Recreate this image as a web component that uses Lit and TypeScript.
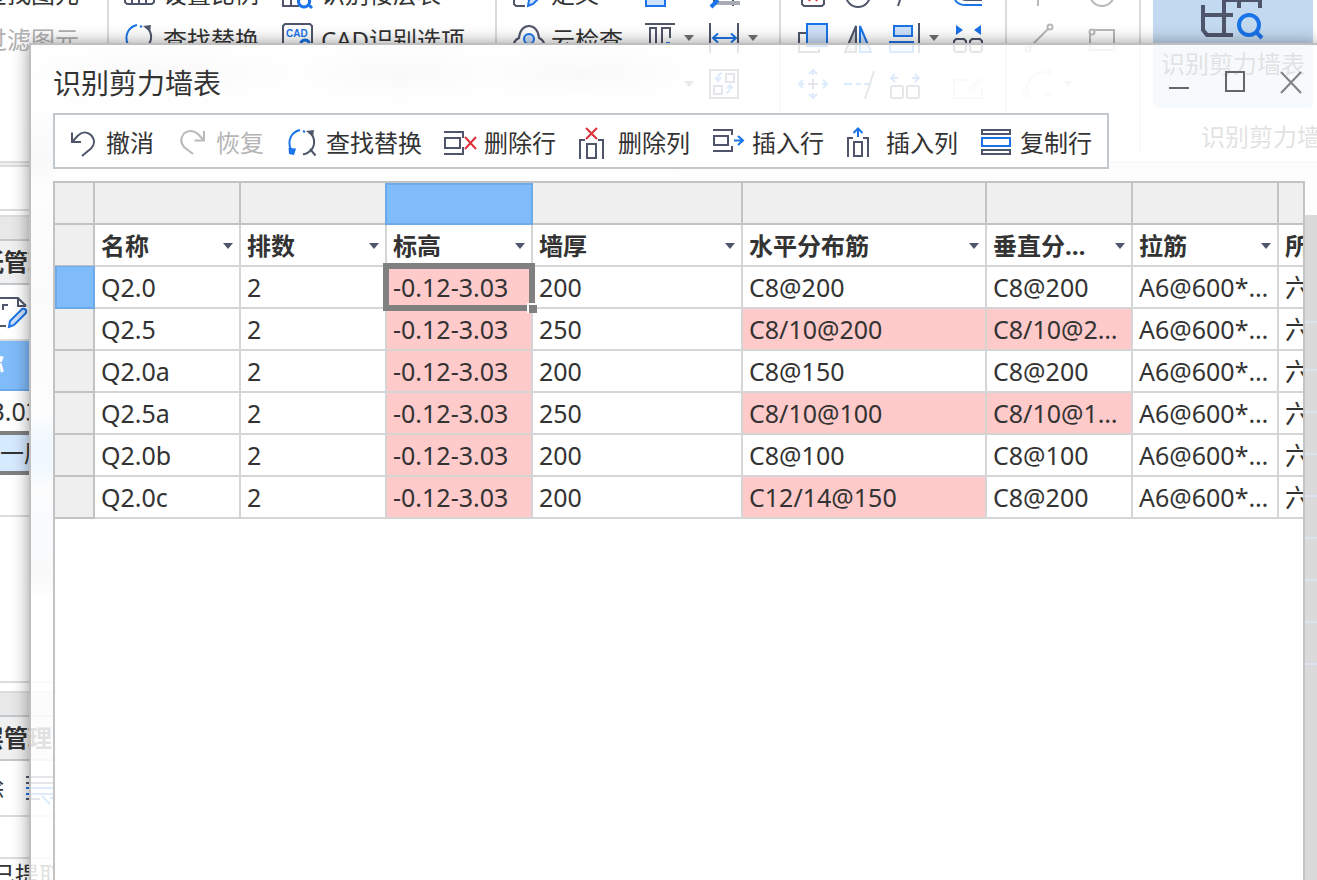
import { LitElement, html, svg, css, nothing, TemplateResult } from "lit";
import { customElement, property } from "lit/decorators.js";
import { classMap } from "lit/directives/class-map.js";

const D = "#4f566b";
const B = "#1a73e8";
const L = "#cfe2fa";
const R = "#dc2f38";
const G = "#b9b9b9";

const line = (d: string, c = D, w = 2, f = "none") =>
  svg`<path d=${d} stroke=${c} stroke-width=${w} fill=${f}></path>`;

const icons: Record<string, TemplateResult | TemplateResult[]> = {
  undo: [
    line("M6 5.500V15H15"),
    line("M7 14L12 8.500C16 4.500 21 4.500 25 8C29.500 13 28.500 18 25 21.500L16 29"),
  ],
  redo: [
    line("M28 4V13.500H18.500", G),
    line("M27 12.500L22 7C18 3 12 3 8 6.500C4 11.500 5 16.500 8 20L17 27", G),
  ],
  find: [
    line("M14 3C5 5 1 14 5 23L7 26", B, 2),
    svg`<path d="M2.500 21L10 21.500L8 28L3 27Z" fill=${B}></path>`,
    line("M17 4L19 5", B, 2),
    line("M24 5C30 12 29 20 24 24C21 27 19 27.500 17 27M24 22L29.500 28.500", D, 2),
    svg`<path d="M20 4L28 3L27 10Z" fill=${D}></path>`,
  ],
  delRow: [
    line("M0 5H19V11M0 27H19V20M1 11H16V21H1Z"),
    line("M21 10L32 22M32 10L21 22", R, 2),
  ],
  delCol: [
    line("M2 32V13H7M25 32V13H20M9 31V17H18V31Z"),
    line("M8 1L19 12M19 1L8 12", R, 2),
  ],
  insRow: [
    line("M1 3H20V8M1 24H20V19M2 9H16V18H2Z"),
    line("M22 13.500H31M26 9L31 13.500L26 18", B, 2),
  ],
  insCol: [
    line("M2 30V11H7M22 30V11H17M8 29V15H16V29Z"),
    line("M12 10V2M7.500 6L12 1.500L16.500 6", B, 2),
  ],
  copyRow: [
    line("M2 3H30V7H2ZM2 23H30V27H2Z"),
    line("M2 11H30V19H2Z", B),
  ],
  ratio: [line("M2 8V26L4 28H29L31 26V8M9 28V23M16 28V20M23 28V23")],
  floorTable: [
    line("M2 5V30H18M10 30V12H30V16M2 12H16"),
    line("M23 20A5.500 5.500 0 1 0 23.100 20ZM27 28L31 32", B, 3),
  ],
  cad: [
    line("M2 31V4L4 2H29L31 4V31"),
    svg`<text x="5" y="15" font-size="10" font-weight="700" font-family="Liberation Sans" fill=${B}>CAD</text>`,
    line("M24 18A4.500 4.500 0 1 0 24.100 18Z", B, 3),
  ],
  define: [
    line("M14 30H5L3 28V4H25V14"),
    svg`<path d="M17 30L18 24L29 13L33 17L22 28Z" fill=${L} stroke=${B} stroke-width="2"></path>`,
  ],
  cloud: [
    line("M5 30C0 25 3 18 8 16C9 0 27 0 28 16C33 18 36 25 31 30"),
    svg`<circle cx="18" cy="17" r="5" fill=${L} stroke=${B} stroke-width="2"></circle>`,
  ],
  block: [line("M2 6H21V30H2Z", B, 2, L)],
  grip: [
    line("M6 4V30M25 4V30"),
    svg`<path d="M8 25H32V29H8Z" fill="#a7abb3"></path>`,
    line("M3 31L10 24", B, 4),
  ],
  alignTop: [line("M1 2H31"), line("M6 32V6H12V32M18 32V6H26V16"), line("M22 21H26", B)],
  dim: [line("M2 1V31M30 1V31"), line("M5 16H28M10 11.500L5 16L10 20.500M23 11.500L28 16L23 20.500", B)],
  swap: [
    line("M2 2H30V30H2ZM18 6H26V14H18ZM6 18H14V26H6Z"),
    line("M14 5C10 6 10 8 10 12M7 9.500L10 13L13 9.500M18 25C22 24 22 22 22 18M19 20.500L22 17L25 20.500", B),
  ],
  delBox: [line("M5 6H27V28L25 30H7L5 28Z"), line("M12 12L20 25M20 12L12 25", R)],
  ring: [svg`<circle cx="15" cy="19" r="12" fill="none" stroke=${D} stroke-width="2"></circle>`],
  slash: [line("M9 30L17 6")],
  offset: [line("M30 29H14C4 29 2 24 2 16", B), line("M30 24H14C9 24 7 20 7 16")],
  copy: [line("M10 11H2V30H22V27"), line("M10 2H30V24H10Z", B, 2, L)],
  mirror: [
    svg`<path d="M13 4V30H2Z" fill="#cfd1d6" stroke=${D} stroke-width="2"></path>`,
    svg`<path d="M17 4V30H28Z" fill=${L} stroke=${B} stroke-width="2"></path>`,
  ],
  alignRight: [line("M30 1V31"), line("M5 4H23V14H5Z", B, 2, L), line("M1 20H24V30H1Z", B, 2, L)],
  merge: [
    line("M2 19L4 17H12L14 19V28L12 30H4L2 28ZM18 19L20 17H28L30 19V28L28 30H20L18 28Z"),
    svg`<path d="M4 3L11 8L4 13ZM29 3L22 8L29 13Z" fill=${B}></path>`,
  ],
  move: [
    line("M16 11V21M11 16H21"),
    line("M12 6L16 2L20 6M12 26L16 30L20 26M6 12L2 16L6 20M26 12L30 16L26 20M16 2V7M16 25V30M2 16H7M25 16H30", B),
  ],
  trim: [line("M1 16H9M13 16H18M21 16H28", B), line("M22 31L31 3")],
  split: [
    line("M2 19L3 18H13L14 19V29L13 30H3L2 29ZM18 19L19 18H29L30 19V29L29 30H19L18 29Z"),
    line("M3 10H9M6 6L2 10L6 14M23 10H29M26 6L30 10L26 14", B),
  ],
  edit: [line("M16 12H2V30H30V20M15 22L30 10M15 22H20L30 14", G)],
  pole: [line("M15 4V30", G)],
  ringG: [svg`<circle cx="15" cy="18" r="12" fill="none" stroke=${G} stroke-width="2"></circle>`],
  segment: [line("M7 25L25 7", G), svg`<circle cx="5" cy="27" r="2.500" fill="none" stroke=${G} stroke-width="2"></circle><circle cx="27" cy="5" r="2.500" fill="none" stroke=${G} stroke-width="2"></circle>`],
  rectG: [line("M3 8H27V28H3Z", G), svg`<circle cx="5" cy="10" r="2.500" fill="#fff" stroke=${G} stroke-width="2"></circle>`],
  arc: [line("M3 24C4 12 12 4 22 4", G), svg`<circle cx="3" cy="26" r="2.500" fill="none" stroke=${G} stroke-width="2"></circle><circle cx="25" cy="26" r="2.500" fill="none" stroke=${G} stroke-width="2"></circle><circle cx="25" cy="4" r="2.500" fill="none" stroke=${G} stroke-width="2"></circle>`],
  sheet: [
    line("M2 30V2H22L30 10M22 2V10H30M10 30H2M7 14V9H12"),
    svg`<path d="M13 31L14 25L26 13C29 12 31 14 30 17L18 29Z" fill=${L} stroke=${B} stroke-width="2"></path>`,
  ],
  layers: [line("M0 5H32M0 27H14M0 11H32"), line("M0 16H32M0 22H32M16 24L24 32M24 26H32", B)],
  min: [line("M6 21H26", "#666")],
  max: [line("M7 5H25V24H7Z", "#666")],
  close: [line("M6 5L26 26M26 5L6 26", "#808080")],
};

@customElement("ui-icon")
export class UiIcon extends LitElement {
  static styles = css`
    :host { display: block; flex: none; width: 32px; height: 32px; }
    svg { display: block; overflow: visible; }
  `;
  @property() name = "";
  render() {
    return html`<svg width="32" height="32" viewBox="0 0 32 32" aria-hidden="true">${icons[this.name]}</svg>`;
  }
}

type Tool = { icon?: string; text?: string; label?: string; menu?: boolean; off?: boolean };
type Column = { w: string; tools: Tool[] };

const ribbon: { cls: string; cols: Column[] }[] = [
  { cls: "g-filter", cols: [{ w: "end", tools: [{ text: "查找图元" }, { text: "过滤图元", off: true }] }] },
  {
    cls: "g-cad",
    cols: [
      { w: "w158", tools: [{ icon: "ratio", text: "设置比例" }, { icon: "find", text: "查找替换" }] },
      { w: "w214", tools: [{ icon: "floorTable", text: "识别楼层表" }, { icon: "cad", text: "CAD识别选项" }] },
    ],
  },
  {
    cls: "g-define",
    cols: [
      { w: "w133", tools: [{ icon: "define", text: "定义" }, { icon: "cloud", text: "云检查" }] },
      { w: "w64", tools: [{ icon: "block", label: "图块" }, { icon: "alignTop", label: "顶对齐", menu: true }, { label: "更多", menu: true }] },
      { w: "w71", tools: [{ icon: "grip", label: "夹点" }, { icon: "dim", label: "标注", menu: true }, { icon: "swap", label: "转换" }] },
    ],
  },
  {
    cls: "g-modify",
    cols: [
      { w: "w46", tools: [{ icon: "delBox", label: "删除" }, { icon: "copy", label: "复制" }, { icon: "move", label: "移动" }] },
      { w: "w46", tools: [{ icon: "ring", label: "旋转" }, { icon: "mirror", label: "镜像" }, { icon: "trim", label: "修剪" }] },
      { w: "w63", tools: [{ icon: "slash", label: "打断" }, { icon: "alignRight", label: "对齐", menu: true }, { icon: "split", label: "分割" }] },
      { w: "w53", tools: [{ icon: "offset", label: "偏移" }, { icon: "merge", label: "合并" }, { icon: "edit", label: "编辑", off: true }] },
    ],
  },
  {
    cls: "g-draw",
    cols: [
      { w: "w64", tools: [{ icon: "pole", label: "点" }, { icon: "segment", label: "直线" }, { icon: "arc", label: "弧线", menu: true, off: true }] },
      { w: "w52", tools: [{ icon: "ringG", label: "圆" }, { icon: "rectG", label: "矩形" }] },
    ],
  },
];

const commands: [string, string][] = [
  ["undo", "撤消"], ["redo", "恢复"], ["find", "查找替换"], ["delRow", "删除行"],
  ["delCol", "删除列"], ["insRow", "插入行"], ["insCol", "插入列"], ["copyRow", "复制行"],
];

const headers = ["名称", "排数", "标高", "墙厚", "水平分布筋", "垂直分布筋", "拉筋", "所"];
const rows = [
  ["Q2.0", "2", "-0.12-3.03", "200", "C8@200", "C8@200", "A6@600*600", "六"],
  ["Q2.5", "2", "-0.12-3.03", "250", "C8/10@200", "C8/10@200", "A6@600*600", "六"],
  ["Q2.0a", "2", "-0.12-3.03", "200", "C8@150", "C8@200", "A6@600*600", "六"],
  ["Q2.5a", "2", "-0.12-3.03", "250", "C8/10@100", "C8/10@100", "A6@600*600", "六"],
  ["Q2.0b", "2", "-0.12-3.03", "200", "C8@100", "C8@100", "A6@600*600", "六"],
  ["Q2.0c", "2", "-0.12-3.03", "200", "C12/14@150", "C8@200", "A6@600*600", "六"],
];
const flagged = (col: number, v: string) => col === 2 || v.includes("/");

@customElement("app-root")
export class AppRoot extends LitElement {
  static styles = css`
    :host {
      display: block; position: relative; height: 100vh; overflow: hidden;
      background: #fff; color: #333;
      font: 24px/32px "Noto Sans", "Noto Sans CJK SC", sans-serif;
    }
    * { box-sizing: border-box; }
    button { font: inherit; color: inherit; background: none; border: 0; padding: 0; margin: 0; white-space: nowrap; }

    .app { display: flex; flex-direction: column; height: 100%; overflow: hidden; }
    .ribbon { display: flex; flex: none; margin-top: -31px; padding-bottom: 8px; border-bottom: 2px solid #dcdcdc; }
    .group { display: flex; flex: none; height: 184px; border-right: 2px solid #dcdcdc; }
    .g-filter { width: 109px; padding-right: 28px; justify-content: flex-end; }
    .g-cad, .g-define { padding-left: 14px; }
    .g-modify, .g-draw { padding-left: 16px; }
    .col { display: flex; flex-direction: column; flex: none; }
    .end { align-items: flex-end; }
    .w46 { width: 46px; } .w52 { width: 52px; } .w53 { width: 53px; } .w63 { width: 63px; }
    .w64 { width: 64px; } .w71 { width: 71px; } .w133 { width: 133px; } .w158 { width: 158px; } .w214 { width: 214px; }
    .tool { display: flex; align-items: center; gap: 8px; height: 46px; }
    .word { padding-top: 4px; }
    .slot { width: 32px; }
    .off { color: #b0b0b0; }
    .off ui-icon { opacity: 0.5; }
    .off .caret { opacity: 0.4; }
    .caret { width: 0; height: 0; border: 5px solid transparent; border-top: 6px solid #707070; border-bottom: 0; }
    .feature { flex: 1; min-width: 0; overflow: hidden; padding-left: 12px; display: flex; flex-direction: column; justify-content: space-between; height: 184px; }
    .big { display: flex; flex-direction: column; align-items: center; gap: 8px; width: 160px; height: 139px; padding-top: 7px; background: #c3d9f0; border-radius: 6px; }
    .big svg { display: block; flex: none; }
    .caption { padding-left: 48px; white-space: nowrap; }

    .work { display: flex; flex: 1; min-height: 0; background: #f0f0f0; }
    .side { flex: none; width: 104px; margin-left: -44px; background: #fff; overflow: hidden; }
    .blk { display: flex; align-items: center; height: 42px; border-bottom: 2px solid #dcdcdc; white-space: nowrap; }
    .h4 { height: 4px; background: #f0f0f0; }
    .h6 { height: 6px; }
    .h10 { height: 10px; }
    .h44 { height: 44px; }
    .h166 { height: 166px; }
    .band { height: 24px; background: #e8e8e8; border-color: #c3c8cc; }
    .head { height: 44px; background: #f0f0f0; border-color: #c3c8cc; font-weight: 700; }
    .bar { height: 56px; gap: 22px; }
    .sheets { padding-left: 40px; }
    .chosen { height: 50px; background: #80bbfa; border-color: #6caaea; color: #fff; font-weight: 700; }
    .level { height: 40px; border: 0; justify-content: flex-end; padding-right: 20px; font-size: 25px; }
    .active { height: 44px; background: #d6eaff; border: solid #808080; border-width: 4px 0; padding-left: 20px; }
    .extracted { border: 0; height: 32px; padding-left: 35px; }
    .canvas { flex: 1; margin-top: 52px; background: #000; }
    .beam { height: 42px; border-bottom: 2px solid #0a4a8a; }
    .beam.first { height: 108px; }
    .beam.second { height: 48px; }

    .dialog {
      position: absolute; z-index: 1; inset: 43px -2px -2px 29px; display: flex; flex-direction: column;
      border: 2px solid #bfbfbf; background: rgba(255, 255, 255, 0.855); box-shadow: 0 0 16px rgba(0, 0, 0, 0.4);
    }
    .dialog::before {
      content: ""; position: absolute; z-index: -1; left: 0; top: 0; width: 648px; height: 136px;
      background:
        radial-gradient(ellipse 130px 24px at 130px 28px, #f9f9f9, transparent),
        radial-gradient(ellipse 100px 26px at 370px 28px, #f9f9f9, transparent),
        radial-gradient(ellipse 110px 24px at 550px 28px, #f9f9f9, transparent), #fefefe;
    }
    .dialog::after {
      content: ""; position: absolute; z-index: -1; left: 0; top: 68px; width: 22px; height: 484px;
      background: linear-gradient(#fdfdfd 0, #f9f9f9 50px, #fdfdfd 70px, #fbfbfb 180px, #fdfdfd 300px, #f1f8ff 325px, #f1f8ff 355px, #fcfcfc 375px, #f9fbfe 400px, #f9fbfe 435px, #f9f9f9 460px, #fefefe);
    }
    .title { display: flex; flex: none; align-items: center; height: 68px; padding: 8px 6px 0 22px; }
    h1 { flex: 1; margin: 0; font-size: 28px; font-weight: 400; line-height: 40px; }
    .controls { display: flex; gap: 16px; }
    .controls button { display: flex; justify-content: center; width: 40px; }
    .commands { display: flex; flex: none; align-self: flex-start; gap: 22px; height: 56px; margin-left: 22px; padding: 4px 15px 0 11px; background: #fff; border: 2px solid #c3c8cc; }
    .command { display: flex; align-items: center; gap: 8px; }
    .command:disabled { color: #b5b5b5; }

    .sheet { flex: 1; min-height: 0; margin: 12px 12px 0 22px; overflow: hidden; background: #fff; border: 2px solid #c3c3c3; border-bottom: 0; }
    table { table-layout: fixed; width: 1370px; border-collapse: separate; border-spacing: 0; }
    .c40 { width: 40px; }
    .c146 { width: 146px; }
    .c210 { width: 210px; }
    .c244 { width: 244px; }
    th, td { position: relative; height: 42px; padding: 0 6px; border: solid #d5d5d5; border-width: 0 2px 2px 0; text-align: left; font-weight: 400; line-height: 32px; }
    td { font-size: 25px; }
    .strip, .rowhead { background: #efefef; border-color: #c3c3c3; }
    .mark { background: #80bbfa; border-color: #6caaea; box-shadow: inset 0 2px #6caaea, -2px 0 #6caaea; }
    .rowhead.mark { box-shadow: inset 2px 0 #6caaea, 0 -1px #6caaea; }
    .name { padding-top: 2px; font-weight: 700; }
    .field { display: flex; align-items: center; gap: 16px; }
    .clip { display: block; flex: 1; min-width: 0; overflow: hidden; text-overflow: ellipsis; white-space: nowrap; }
    .filter { flex: none; display: flex; }
    .filter .caret { border-top-color: #4f566b; }
    .flag { background: #ffcaca; }
    .current::before { content: ""; position: absolute; z-index: 1; inset: -4px; border: 6px solid #808080; }
    .handle { position: absolute; z-index: 2; right: -6px; bottom: -6px; width: 10px; height: 10px; background: #808080; border: solid #fff; border-width: 2px 0 0 2px; }
  `;

  private tool(t: Tool) {
    return html`<button class=${classMap({ tool: true, off: !!t.off })} aria-label=${t.text ?? t.label ?? nothing}>
      ${t.icon ? html`<ui-icon name=${t.icon}></ui-icon>` : t.text ? nothing : html`<span class="slot"></span>`}
      ${t.text ? html`<span class="word">${t.text}</span>` : nothing}${t.menu ? html`<span class="caret"></span>` : nothing}
    </button>`;
  }

  private backdrop() {
    return html`<div class="app">
      <div class="ribbon">
        ${ribbon.map((g) => html`<div class="group ${g.cls}">
          ${g.cols.map((c) => html`<div class="col ${c.w}">${c.tools.map((t) => this.tool(t))}</div>`)}
        </div>`)}
        <div class="feature">
          <button class="big">
            <svg width="64" height="64" viewBox="0 0 64 64" aria-hidden="true">
              <path d="M2 29V54L6 59H32M2 39H32M23 10V59M23 24H61M38 24V32M59 24V32" fill="none" stroke="#4f566b" stroke-width="4"></path>
              <circle cx="48" cy="49" r="10" fill="none" stroke="#1a73e8" stroke-width="4"></circle>
              <path d="M55 56L61 62" stroke="#1a73e8" stroke-width="4"></path>
            </svg>
            识别剪力墙表
          </button>
          <div class="caption">识别剪力墙表</div>
        </div>
      </div>
      <div class="work">
        <div class="side">
          <div class="blk h4"></div><div class="blk h44"></div><div class="blk h6"></div>
          <div class="blk band"></div>
          <div class="blk head">图纸管理</div>
          <div class="blk bar sheets"><ui-icon name="sheet"></ui-icon></div>
          <div class="blk chosen">名称</div>
          <div class="blk level">-0.12-3.03</div>
          <div class="blk active">第一层</div>
          <div class="blk"></div><div class="blk h166"></div><div class="blk h10"></div>
          <div class="blk band"></div>
          <div class="blk head">楼层管理</div>
          <div class="blk bar">删除<ui-icon name="layers"></ui-icon></div>
          <div class="blk"></div>
          <div class="blk extracted">已提取</div>
        </div>
        <div class="canvas">
          <div class="beam first"></div><div class="beam second"></div>
          ${Array.from({ length: 7 }, () => html`<div class="beam"></div>`)}
        </div>
      </div>
    </div>`;
  }

  render() {
    return html`${this.backdrop()}
      <section class="dialog" role="dialog" aria-labelledby="t">
        <header class="title">
          <h1 id="t">识别剪力墙表</h1>
          <div class="controls">
            <button aria-label="最小化"><ui-icon name="min"></ui-icon></button>
            <button aria-label="最大化"><ui-icon name="max"></ui-icon></button>
            <button aria-label="关闭"><ui-icon name="close"></ui-icon></button>
          </div>
        </header>
        <nav class="commands">
          ${commands.map(([i, t]) => html`<button class="command" ?disabled=${i === "redo"}><ui-icon name=${i}></ui-icon>${t}</button>`)}
        </nav>
        <div class="sheet">
          <table>
            <colgroup>
              <col class="c40" /><col class="c146" /><col class="c146" /><col class="c146" /><col class="c210" />
              <col class="c244" /><col class="c146" /><col class="c146" /><col class="c146" />
            </colgroup>
            <thead>
              <tr>
                <td class="strip"></td>
                ${headers.map((_, i) => html`<td class=${classMap({ strip: true, mark: i === 2 })}></td>`)}
              </tr>
              <tr>
                <td class="rowhead"></td>
                ${headers.map((h) => html`<th class="name" scope="col"><div class="field">
                  <span class="clip">${h}</span>
                  <button class="filter" aria-label="筛选"><span class="caret"></span></button>
                </div></th>`)}
              </tr>
            </thead>
            <tbody>
              ${rows.map((r, y) => html`<tr>
                <td class=${classMap({ rowhead: true, mark: y === 0 })}></td>
                ${r.map((v, x) => html`<td class=${classMap({ flag: flagged(x, v), current: y === 0 && x === 2 })}>
                  <span class="clip">${v}</span>${y === 0 && x === 2 ? html`<i class="handle"></i>` : nothing}
                </td>`)}
              </tr>`)}
            </tbody>
          </table>
        </div>
      </section>`;
  }
}
